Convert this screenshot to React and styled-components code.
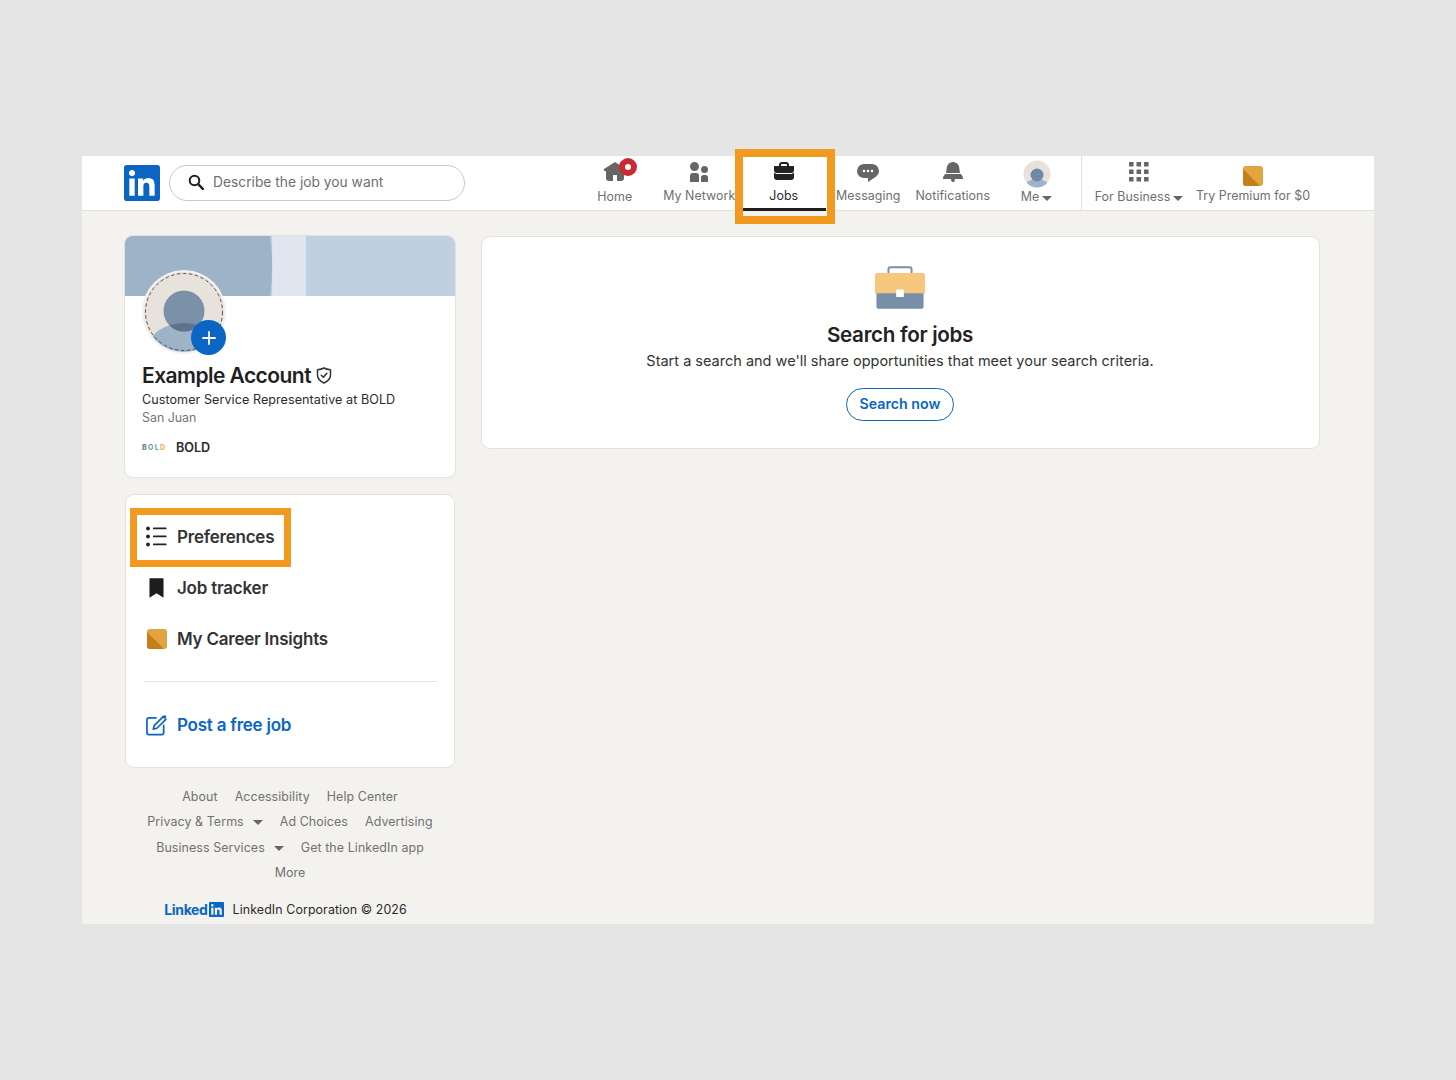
import React from 'react';
import styled, { createGlobalStyle } from 'styled-components';

const GlobalStyle = createGlobalStyle`
  html, body {
    margin: 0;
    padding: 0;
    background-color: #e5e5e5;
    font-family: Inter, "Liberation Sans", sans-serif;
  }
`;

const Screen = styled.div`
  padding: 156px 0 156px 82px;
`;

const Frame = styled.div`
  width: 1292px;
  height: 768px;
  background-color: #f3f2ef;
  position: relative;
`;

const Header = styled.header`
  height: 54px;
  background-color: #fff;
  border-bottom: 1px solid #e2e1de;
  display: flex;
  padding-left: 42px;
`;

const Logo = styled.svg`
  width: 36px;
  height: 36px;
  margin-top: 9px;
  fill: #0a66c2;
  flex: none;
`;

const SearchBox = styled.div`
  width: 296px;
  height: 36px;
  box-sizing: border-box;
  margin: 9px 0 0 9px;
  border: 1px solid #c9c9c9;
  border-radius: 18px;
  display: flex;
  align-items: center;
  gap: 9px;
  padding: 0 0 2px 18px;
  font-size: 13.8px;
  color: #6f6f6f;
  flex: none;
`;

const Nav = styled.nav`
  display: flex;
  margin-left: 107.5px;
  height: 55px;
`;

const NavItem = styled.div`
  width: ${(p) => p.$width || 84.5}px;
  height: 55px;
  position: relative;
  display: flex;
  flex-direction: column;
  align-items: center;
  color: ${(p) => (p.$active ? '#2a2a2a' : '#6f6f6f')};
  font-size: 12.4px;
  letter-spacing: 0.05px;
  white-space: nowrap;
  flex: none;
`;

const NavIconWrap = styled.div`
  height: 24px;
  margin-top: 4px;
  position: relative;
  svg { display: block; }
`;

const PremiumSlot = styled.span`
  display: block;
  margin-top: 6px;
`;

const NavLabel = styled.span`
  margin-top: ${(p) => p.$offset ?? 4}px;
  line-height: 16px;
  display: flex;
  align-items: center;
  gap: 3px;
`;

const NavDivider = styled.div`
  width: 1px;
  height: 54px;
  background-color: #e0dfdc;
  margin-left: 2.5px;
  flex: none;
`;

const Caret = styled.i`
  display: inline-block;
  width: 0;
  height: 0;
  border-left: 5px solid transparent;
  border-right: 5px solid transparent;
  border-top: 5px solid #666;
  margin-top: 2px;
`;

const Badge = styled.span`
  position: absolute;
  top: -2px;
  right: -10px;
  width: 18px;
  height: 18px;
  box-sizing: border-box;
  border-radius: 50%;
  border: 6px solid #cb2a32;
  background-color: #fff;
`;

const ActiveBar = styled.span`
  position: absolute;
  left: 0;
  right: 0;
  top: 52px;
  height: 3px;
  background-color: #1f1f1f;
`;

const JobsHighlight = styled.span`
  position: absolute;
  left: -6.5px;
  top: -7px;
  width: 100px;
  height: 75px;
  box-sizing: border-box;
  border: 8px solid #f29a1f;
`;

const Main = styled.main`
  display: grid;
  grid-template-columns: 332px 839px;
  gap: 25px;
  padding: 24px 0 0 42px;
  align-items: start;
`;

const Sidebar = styled.aside`
  display: flex;
  flex-direction: column;
`;

const Card = styled.section`
  background-color: #fff;
  border: 1px solid #e3e2df;
  border-radius: 9px;
  box-sizing: border-box;
`;

const ProfileCard = styled(Card)`
  height: 243px;
  position: relative;
  overflow: hidden;
`;

const Banner = styled.svg`
  display: block;
  width: 100%;
  height: 60px;
`;

const Avatar = styled.svg`
  position: absolute;
  left: 17px;
  top: 34px;
  width: 84px;
  height: 84px;
`;

const AddPhoto = styled.span`
  position: absolute;
  left: 66px;
  top: 84px;
  width: 35px;
  height: 35px;
  border-radius: 50%;
  background-color: #0a66c2;
  display: flex;
  align-items: center;
  justify-content: center;
`;

const ProfileBody = styled.div`
  padding: 66px 0 0 17px;
`;

const NameRow = styled.div`
  display: flex;
  align-items: center;
  gap: 5px;
  height: 26px;
  font-size: 21px;
  font-weight: 600;
  letter-spacing: -0.55px;
  color: #1f1f1f;
`;

const Headline = styled.div`
  margin-top: 3px;
  font-size: 12.6px;
  letter-spacing: 0.05px;
  line-height: 18px;
  color: #2b2b2b;
`;

const Location = styled.div`
  font-size: 12.4px;
  line-height: 18px;
  color: #757575;
`;

const Company = styled.div`
  display: flex;
  align-items: center;
  gap: 9px;
  margin-top: 12px;
  font-size: 12.6px;
  line-height: 18px;
  font-weight: 600;
  color: #2b2b2b;
`;

const CompanyLogo = styled.span`
  font-size: 7px;
  font-weight: 800;
  letter-spacing: 1.3px;
  width: 25px;
  display: flex;
`;

const LogoLetter = styled.span`
  color: ${(p) => p.$color};
`;

const MenuCard = styled(Card)`
  margin: 16px 1px 0;
  height: 274px;
  padding-top: 16px;
`;

const MenuRow = styled.div`
  height: 51px;
  display: flex;
  align-items: center;
  gap: 10px;
  padding-left: 20px;
  font-size: 17px;
  font-weight: 600;
  letter-spacing: -0.23px;
  color: ${(p) => p.$color || '#333'};
  position: relative;
`;

const MenuIcon = styled.span`
  width: 21px;
  height: 21px;
  display: flex;
  align-items: center;
  justify-content: center;
  flex: none;
`;

const PrefHighlight = styled.span`
  position: absolute;
  left: 4px;
  top: -3px;
  width: 161px;
  height: 59px;
  box-sizing: border-box;
  border: 7px solid #f29a1f;
`;

const MenuDivider = styled.hr`
  border: 0;
  height: 1px;
  background-color: #e6e5e2;
  margin: 17px 17px 17px 18px;
`;

const Footer = styled.footer`
  padding-top: 15.6px;
  display: flex;
  flex-direction: column;
  align-items: center;
`;

const FooterRow = styled.div`
  display: flex;
  justify-content: center;
  align-items: center;
  gap: 17px;
  height: 25.4px;
  font-size: 12.4px;
  letter-spacing: 0.1px;
  color: #717171;
  white-space: nowrap;
`;

const FooterDrop = styled.span`
  display: inline-flex;
  align-items: center;
  gap: 9px;
`;

const Brand = styled.div`
  margin: 15.4px 9px 0 0;
  height: 18px;
  display: flex;
  align-items: center;
  gap: 9px;
  font-size: 12.4px;
  letter-spacing: 0.1px;
  color: #2b2b2b;
  white-space: nowrap;
`;

const BrandLogo = styled.span`
  display: flex;
  align-items: center;
  gap: 1px;
  color: #0a66c2;
  font-size: 14px;
  font-weight: 700;
  letter-spacing: -0.35px;
`;

const JobsCard = styled(Card)`
  margin-top: 1px;
  height: 213px;
  display: flex;
  flex-direction: column;
  align-items: center;
  padding: 29px 1px 0 0;
`;

const CaseArt = styled.svg`
  width: 50px;
  height: 43px;
  display: block;
`;

const JobsTitle = styled.h2`
  margin: 13px 0 0;
  font-size: 20.6px;
  line-height: 26px;
  font-weight: 600;
  letter-spacing: -0.3px;
  color: #222;
`;

const JobsText = styled.p`
  margin: 3px 0 0;
  font-size: 14.5px;
  line-height: 20px;
  color: #333;
`;

const SearchButton = styled.button`
  margin-top: 17px;
  width: 108px;
  height: 33px;
  border: 1px solid #0a66c2;
  border-radius: 17px;
  background-color: #fff;
  color: #0a66c2;
  font-family: inherit;
  font-size: 14.2px;
  font-weight: 600;
  padding: 0 0 2px;
`;

const linkedinPath = 'M20.447 20.452h-3.554v-5.569c0-1.328-.027-3.037-1.852-3.037-1.853 0-2.136 1.445-2.136 2.939v5.667H9.351V9h3.414v1.561h.046c.477-.9 1.637-1.85 3.37-1.85 3.601 0 4.267 2.37 4.267 5.455v6.286zM5.337 7.433c-1.144 0-2.063-.926-2.063-2.065 0-1.138.92-2.063 2.063-2.063 1.14 0 2.064.925 2.064 2.063 0 1.139-.925 2.065-2.064 2.065zm1.782 13.019H3.555V9h3.564v11.452zM22.225 0H1.771C.792 0 0 .774 0 1.729v20.542C0 23.227.792 24 1.771 24h20.451C23.2 24 24 23.227 24 22.271V1.729C24 .774 23.2 0 22.222 0h.003z';

const navIcons = {
  home: 'M23 9v2h-2v7a3 3 0 01-3 3h-4v-6h-4v6H6a3 3 0 01-3-3v-7H1V9l11-7 5 3.18V2h3v5.09z',
  network: 'M12 16v6H3v-6a3 3 0 013-3h3a3 3 0 013 3zm5.5-3A3.5 3.5 0 1014 9.5a3.5 3.5 0 003.5 3.5zm1 2h-2a2.5 2.5 0 00-2.5 2.5V22h7v-4.5a2.5 2.5 0 00-2.5-2.5zM7.5 2A4.5 4.5 0 1012 6.5 4.49 4.49 0 007.5 2z',
  jobs: 'M17 6V5a3 3 0 00-3-3h-4a3 3 0 00-3 3v1H2v4a3 3 0 003 3h14a3 3 0 003-3V6zM9 5a1 1 0 011-1h4a1 1 0 011 1v1H9zm10 9a4 4 0 003-1.38V17a3 3 0 01-3 3H5a3 3 0 01-3-3v-4.38A4 4 0 005 14z',
  messaging: 'M16 4H8a7 7 0 000 14h4v4l8.16-5.39A6.78 6.78 0 0023 11a7 7 0 00-7-7zm-8 8.25A1.25 1.25 0 119.25 11 1.25 1.25 0 018 12.25zm4 0A1.25 1.25 0 1113.25 11 1.25 1.25 0 0112 12.25zm4 0A1.25 1.25 0 1117.25 11 1.25 1.25 0 0116 12.25z',
  notifications: 'M22 19h-8.28a2 2 0 11-3.44 0H2v-1a4.52 4.52 0 011.17-2.83l1-1.17h15.7l1 1.17A4.42 4.42 0 0122 18zM18.21 7.44A6.27 6.27 0 0012 2a6.27 6.27 0 00-6.21 5.44L5 13h14z',
};

const NavIcon = ({ name, color = '#666' }) => (
  <svg width="24" height="24" viewBox="0 0 24 24" fill={color}>
    <path d={navIcons[name]} />
  </svg>
);

const PremiumIcon = ({ size = 20 }) => (
  <svg width={size} height={size} viewBox="0 0 20 20">
    <rect width="20" height="20" rx="3" fill="#e3a43f" />
    <path d="M0 3 L17 20 H3 a3 3 0 0 1 -3 -3 Z" fill="#c47f1c" />
  </svg>
);

const GridIcon = () => (
  <svg width="24" height="24" viewBox="0 0 24 24" fill="#666">
    {[2, 9.5, 17].map((y) =>
      [2, 9.5, 17].map((x) => <rect key={`${x}-${y}`} x={x} y={y} width="4.6" height="4.6" rx="0.6" />)
    )}
  </svg>
);

const MeIcon = () => (
  <svg width="28" height="28" viewBox="0 0 28 28">
    <defs>
      <clipPath id="me-clip"><circle cx="14" cy="14" r="13.5" /></clipPath>
    </defs>
    <g clipPath="url(#me-clip)">
      <rect width="28" height="28" fill="#e7e2dc" />
      <ellipse cx="14" cy="27" rx="12" ry="8" fill="#9db3c8" />
      <circle cx="14" cy="15" r="6.5" fill="#6f8aa5" />
    </g>
  </svg>
);

const ListIcon = () => (
  <svg width="21" height="21" viewBox="0 0 21 21" fill="#222">
    <circle cx="2" cy="2.5" r="1.9" />
    <circle cx="2" cy="10.5" r="1.9" />
    <circle cx="2" cy="18.5" r="1.9" />
    <rect x="7" y="1.6" width="13.5" height="1.7" rx="0.5" />
    <rect x="7" y="9.6" width="13.5" height="1.7" rx="0.5" />
    <rect x="7" y="17.6" width="13.5" height="1.7" rx="0.5" />
  </svg>
);

const BookmarkIcon = () => (
  <svg width="15" height="22" viewBox="0 0 16 22" fill="#1d1d1d">
    <path d="M1 0.5h14a.5.5 0 0 1 .5.5v20.5L8 16.5 0.5 21.5V1A.5.5 0 0 1 1 .5z" />
  </svg>
);

const ComposeIcon = () => (
  <svg width="22" height="22" viewBox="0 0 22 22" fill="none" stroke="#0a66c2" strokeWidth="1.8" strokeLinecap="round" strokeLinejoin="round">
    <path d="M10.5 3.5H3a2 2 0 0 0-2 2V19a2 2 0 0 0 2 2h13.5a2 2 0 0 0 2-2v-7.5" />
    <path d="M18 2.2 8.6 11.6l-1 3.8 3.8-1L20.8 5" />
    <circle cx="19.4" cy="2.6" r="1.9" fill="#0a66c2" stroke="none" />
  </svg>
);

const SearchIcon = () => (
  <svg width="16" height="16" viewBox="0 0 16 16" fill="none" stroke="#1f1f1f" strokeWidth="2" strokeLinecap="round">
    <circle cx="6.5" cy="6.5" r="4.8" />
    <path d="M10.2 10.2 14.8 14.8" strokeWidth="2.4" />
  </svg>
);

const ShieldIcon = () => (
  <svg width="16" height="17" viewBox="0 0 16 17" fill="none" stroke="#333" strokeWidth="1.5" strokeLinecap="round" strokeLinejoin="round">
    <path d="M8 1c2 1.2 4 1.6 6.5 1.7V8c0 3.6-2.6 6.2-6.5 8C4.1 14.2 1.5 11.6 1.5 8V2.7C4 2.6 6 2.2 8 1z" />
    <path d="M5.3 8.3 7.3 10.3 10.9 6.3" />
  </svg>
);

export default function App() {
  return (
    <>
      <GlobalStyle />
      <Screen>
        <Frame>
          <Header>
            <Logo viewBox="0 0 24 24"><path d={linkedinPath} /></Logo>
            <SearchBox>
              <SearchIcon />
              Describe the job you want
            </SearchBox>
            <Nav>
              <NavItem>
                <NavIconWrap>
                  <NavIcon name="home" />
                  <Badge />
                </NavIconWrap>
                <NavLabel $offset={5}>Home</NavLabel>
              </NavItem>
              <NavItem>
                <NavIconWrap><NavIcon name="network" /></NavIconWrap>
                <NavLabel>My Network</NavLabel>
              </NavItem>
              <NavItem $active>
                <NavIconWrap><NavIcon name="jobs" color="#222" /></NavIconWrap>
                <NavLabel>Jobs</NavLabel>
                <ActiveBar />
                <JobsHighlight />
              </NavItem>
              <NavItem>
                <NavIconWrap><NavIcon name="messaging" /></NavIconWrap>
                <NavLabel>Messaging</NavLabel>
              </NavItem>
              <NavItem>
                <NavIconWrap><NavIcon name="notifications" /></NavIconWrap>
                <NavLabel>Notifications</NavLabel>
              </NavItem>
              <NavItem $width={83}>
                <NavIconWrap><MeIcon /></NavIconWrap>
                <NavLabel $offset={5}>Me <Caret /></NavLabel>
              </NavItem>
              <NavDivider />
              <NavItem $width={115}>
                <NavIconWrap><GridIcon /></NavIconWrap>
                <NavLabel $offset={5}>For Business <Caret /></NavLabel>
              </NavItem>
              <NavItem $width={113}>
                <NavIconWrap><PremiumSlot><PremiumIcon /></PremiumSlot></NavIconWrap>
                <NavLabel>Try Premium for $0</NavLabel>
              </NavItem>
            </Nav>
          </Header>
          <Main>
            <Sidebar>
              <ProfileCard>
                <Banner viewBox="0 0 332 60" preserveAspectRatio="none">
                  <rect width="332" height="60" fill="#bfd0e0" />
                  <rect x="148" width="34" height="60" fill="#dfe6f0" />
                  <path d="M0 0H146Q150 30 146 60H0Z" fill="#9db3c8" />
                </Banner>
                <Avatar viewBox="0 0 84 84">
                  <defs>
                    <clipPath id="avatar-clip"><circle cx="42" cy="42" r="40" /></clipPath>
                    <clipPath id="head-clip"><circle cx="42" cy="41" r="20.5" /></clipPath>
                  </defs>
                  <circle cx="42" cy="42" r="42" fill="#f3f1ee" />
                  <g clipPath="url(#avatar-clip)">
                    <rect width="84" height="84" fill="#e7e2dc" />
                    <ellipse cx="42" cy="79" rx="36" ry="26" fill="#9db3c8" />
                    <circle cx="42" cy="41" r="20.5" fill="#7a91a8" />
                    <ellipse cx="42" cy="79" rx="36" ry="26" fill="#5f7288" clipPath="url(#head-clip)" />
                  </g>
                  <circle cx="42" cy="42" r="38.5" fill="none" stroke="#444" strokeWidth="0.9" strokeDasharray="3.5 2.5" />
                </Avatar>
                <AddPhoto>
                  <svg width="16" height="16" viewBox="0 0 16 16" stroke="#fff" strokeWidth="1.8" strokeLinecap="round">
                    <path d="M8 2v12M2 8h12" />
                  </svg>
                </AddPhoto>
                <ProfileBody>
                  <NameRow>Example Account <ShieldIcon /></NameRow>
                  <Headline>Customer Service Representative at BOLD</Headline>
                  <Location>San Juan</Location>
                  <Company>
                    <CompanyLogo>
                      <LogoLetter $color="#6d7f99">B</LogoLetter>
                      <LogoLetter $color="#8a9aa8">O</LogoLetter>
                      <LogoLetter $color="#63b5ad">L</LogoLetter>
                      <LogoLetter $color="#f0b36a">D</LogoLetter>
                    </CompanyLogo>
                    BOLD
                  </Company>
                </ProfileBody>
              </ProfileCard>
              <MenuCard>
                <MenuRow>
                  <MenuIcon><ListIcon /></MenuIcon>
                  Preferences
                  <PrefHighlight />
                </MenuRow>
                <MenuRow>
                  <MenuIcon><BookmarkIcon /></MenuIcon>
                  Job tracker
                </MenuRow>
                <MenuRow>
                  <MenuIcon><PremiumIcon /></MenuIcon>
                  My Career Insights
                </MenuRow>
                <MenuDivider />
                <MenuRow $color="#0a66c2">
                  <MenuIcon><ComposeIcon /></MenuIcon>
                  Post a free job
                </MenuRow>
              </MenuCard>
              <Footer>
                <FooterRow><span>About</span><span>Accessibility</span><span>Help Center</span></FooterRow>
                <FooterRow>
                  <FooterDrop>Privacy &amp; Terms <Caret /></FooterDrop>
                  <span>Ad Choices</span>
                  <span>Advertising</span>
                </FooterRow>
                <FooterRow>
                  <FooterDrop>Business Services <Caret /></FooterDrop>
                  <span>Get the LinkedIn app</span>
                </FooterRow>
                <FooterRow>More</FooterRow>
                <Brand>
                  <BrandLogo>
                    Linked
                    <svg width="15" height="15" viewBox="0 0 24 24" fill="#0a66c2"><path d={linkedinPath} /></svg>
                  </BrandLogo>
                  LinkedIn Corporation © 2026
                </Brand>
              </Footer>
            </Sidebar>
            <JobsCard>
              <CaseArt viewBox="0 0 52 44">
                <path d="M14 7V3a2 2 0 0 1 2-2h20a2 2 0 0 1 2 2v4" fill="none" stroke="#788fa8" strokeWidth="2" />
                <path d="M1.5 24h49v18a2 2 0 0 1-2 2h-45a2 2 0 0 1-2-2z" fill="#788fa8" />
                <path d="M2 7h48a2 2 0 0 1 2 2v19H0V9a2 2 0 0 1 2-2z" fill="#f8c77e" />
                <rect x="22" y="24" width="8" height="8" rx="1" fill="#fff" />
              </CaseArt>
              <JobsTitle>Search for jobs</JobsTitle>
              <JobsText>Start a search and we'll share opportunities that meet your search criteria.</JobsText>
              <SearchButton>Search now</SearchButton>
            </JobsCard>
          </Main>
        </Frame>
      </Screen>
    </>
  );
}
